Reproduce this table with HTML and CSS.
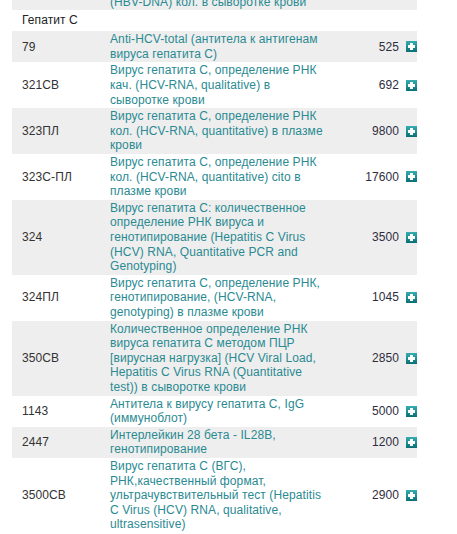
FILE: index.html
```html
<!DOCTYPE html>
<html>
<head>
<meta charset="utf-8">
<link rel="stylesheet" href="styles.css">
</head>
<body>
<div class="wrap">
<table class="prices">
<tr class="odd">
  <td class="code">118CB</td>
  <td class="desc">Вирус гепатита В, определение ДНК (HBV-DNA) кол. в сыворотке крови</td>
  <td class="price">1500</td>
  <td class="add"><span class="plus"></span></td>
</tr>
<tr class="group"><td colspan="4">Гепатит С</td></tr>
<tr class="odd">
  <td class="code">79</td>
  <td class="desc">Anti-HCV-total (антитела к антигенам вируса гепатита С)</td>
  <td class="price">525</td>
  <td class="add"><span class="plus"></span></td>
</tr>
<tr>
  <td class="code">321CB</td>
  <td class="desc">Вирус гепатита С, определение РНК кач. (HCV-RNA, qualitative) в сыворотке крови</td>
  <td class="price">692</td>
  <td class="add"><span class="plus"></span></td>
</tr>
<tr class="odd">
  <td class="code">323ПЛ</td>
  <td class="desc">Вирус гепатита С, определение РНК кол. (HCV-RNA, quantitative) в плазме крови</td>
  <td class="price">9800</td>
  <td class="add"><span class="plus"></span></td>
</tr>
<tr>
  <td class="code">323С-ПЛ</td>
  <td class="desc">Вирус гепатита С, определение РНК кол. (HCV-RNA, quantitative) cito в плазме крови</td>
  <td class="price">17600</td>
  <td class="add"><span class="plus"></span></td>
</tr>
<tr class="odd">
  <td class="code">324</td>
  <td class="desc">Вирус гепатита С: количественное определение РНК вируса и генотипирование (Hepatitis C Virus (HCV) RNA, Quantitative PCR and Genotyping)</td>
  <td class="price">3500</td>
  <td class="add"><span class="plus"></span></td>
</tr>
<tr>
  <td class="code">324ПЛ</td>
  <td class="desc">Вирус гепатита С, определение РНК, генотипирование, (HCV-RNA, genotyping) в плазме крови</td>
  <td class="price">1045</td>
  <td class="add"><span class="plus"></span></td>
</tr>
<tr class="odd">
  <td class="code">350CB</td>
  <td class="desc">Количественное определение РНК вируса гепатита С методом ПЦР [вирусная нагрузка] (HCV Viral Load, Hepatitis C Virus RNA (Quantitative test)) в сыворотке крови</td>
  <td class="price">2850</td>
  <td class="add"><span class="plus"></span></td>
</tr>
<tr>
  <td class="code">1143</td>
  <td class="desc">Антитела к вирусу гепатита С, IgG (иммуноблот)</td>
  <td class="price">5000</td>
  <td class="add"><span class="plus"></span></td>
</tr>
<tr class="odd">
  <td class="code">2447</td>
  <td class="desc">Интерлейкин 28 бета - IL28B, генотипирование</td>
  <td class="price">1200</td>
  <td class="add"><span class="plus"></span></td>
</tr>
<tr>
  <td class="code">3500CB</td>
  <td class="desc">Вирус гепатита С (ВГС), РНК,качественный формат, ультрачувствительный тест (Hepatitis C Virus (HCV) RNA, qualitative, ultrasensitive)</td>
  <td class="price">2900</td>
  <td class="add"><span class="plus"></span></td>
</tr>
</table>
</div>
</body>
</html>
```
FILE: styles.css
```css
html, body {
  margin: 0;
  padding: 0;
  background: #ffffff;
}
body {
  font-family: "Liberation Sans", Arial, sans-serif;
  font-size: 12px;
  letter-spacing: 0.1px;
  line-height: 14.6px;
  color: #333333;
  overflow: hidden;
}
.wrap {
  padding-left: 12px;
  margin-top: -21px;
}
.prices {
  border-collapse: collapse;
  width: 405px;
  table-layout: fixed;
}
.prices td {
  padding: 1px 0;
  vertical-align: middle;
}
.prices tr.odd td {
  background: #eeeeee;
}
.prices td.code {
  width: 88px;
  padding-left: 10px;
  color: #333333;
}
.prices td.desc {
  width: 214px;
  color: #2a8a92;
}
.prices td.price {
  text-align: right;
  padding-right: 7px;
  color: #2e2e3e;
}
.prices td.add {
  width: 11px;
  line-height: 0;
}
.prices tr.group td {
  padding: 3px 10px 3.5px;
  color: #222222;
}
.plus {
  display: inline-block;
  position: relative;
  width: 11px;
  height: 11px;
  background: linear-gradient(#35aeb2, #0b6f74);
}
.plus::before,
.plus::after {
  content: "";
  position: absolute;
  background: #ffffff;
}
.plus::before {
  left: 4px;
  top: 2px;
  width: 3px;
  height: 7px;
}
.plus::after {
  left: 2px;
  top: 4px;
  width: 7px;
  height: 3px;
}
```
